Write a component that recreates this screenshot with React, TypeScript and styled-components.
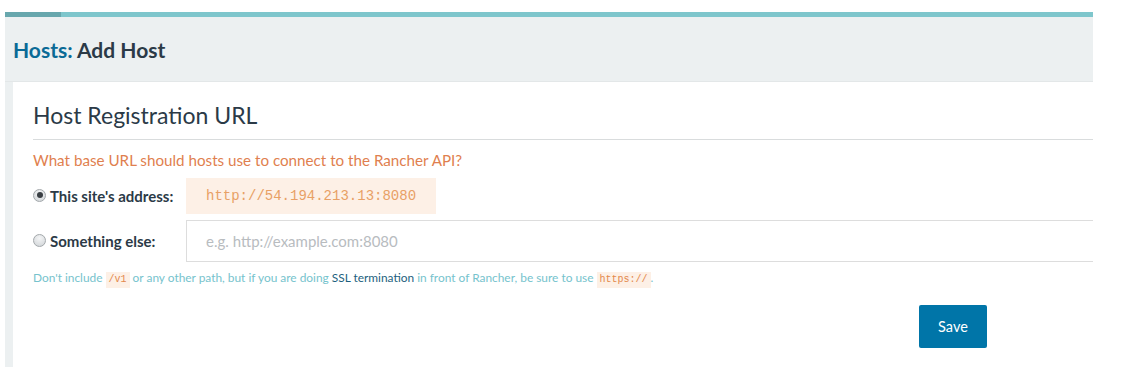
import React, { useState } from "react";
import styled, { createGlobalStyle } from "styled-components";

const GlobalStyle = createGlobalStyle`
  body {
    margin: 0;
    background: #ffffff;
    font-family: Lato, "Open Sans", "Liberation Sans", sans-serif;
  }
`;

const App = () => {
  const [choice, setChoice] = useState<"site" | "other">("site");

  return (
    <>
      <GlobalStyle />
      <Page>
        <TopBar>
          <TopBarActive />
        </TopBar>
        <Header>
          <Title>
            <TitleLink>Hosts:</TitleLink> Add Host
          </Title>
        </Header>
        <Card>
          <Heading>Host Registration URL</Heading>
          <Question>What base URL should hosts use to connect to the Rancher API?</Question>
          <Row>
            <Label>
              <Radio
                type="radio"
                name="url"
                checked={choice === "site"}
                onChange={() => setChoice("site")}
              />
              This site's address:
            </Label>
            <SiteAddress>http://54.194.213.13:8080</SiteAddress>
          </Row>
          <Row $gap={6}>
            <Label>
              <Radio
                type="radio"
                name="url"
                checked={choice === "other"}
                onChange={() => setChoice("other")}
              />
              Something else:
            </Label>
            <TextInput placeholder="e.g. http://example.com:8080" />
          </Row>
          <Help>
            Don't include <Chip>/v1</Chip> or any other path, but if you are doing{" "}
            <Strong>SSL termination</Strong> in front of Rancher, be sure to use{" "}
            <Chip>https://</Chip>.
          </Help>
          <Footer>
            <SaveButton>Save</SaveButton>
          </Footer>
        </Card>
      </Page>
    </>
  );
};

export default App;

const Page = styled.div`
  margin: 12px 0 0 5px;
  width: 1088px;
  height: 355px;
  background: #ecf0f1;
  overflow: hidden;
  display: flex;
  flex-direction: column;
`;

const TopBar = styled.div`
  height: 5px;
  flex-shrink: 0;
  background: #7ec6cc;
  display: flex;
`;

const TopBarActive = styled.div`
  width: 56px;
  background: #68a7ad;
`;

const Header = styled.div`
  height: 64px;
  flex-shrink: 0;
  display: flex;
  align-items: center;
  padding-left: 8px;
  border-bottom: 1px solid #e3e7e8;
`;

const Title = styled.h1`
  margin: 0;
  font-size: 21px;
  font-weight: 700;
  color: #2b3a47;
`;

const TitleLink = styled.span`
  color: #0a6a96;
`;

const Card = styled.div`
  margin-left: 8px;
  width: 1840px;
  flex: 1;
  background: #ffffff;
  padding: 0 20px;
`;

const Heading = styled.h2`
  margin: 0;
  padding: 20px 0 10px;
  font-size: 23px;
  font-weight: 400;
  line-height: 27px;
  color: #2b3a47;
  border-bottom: 1px solid #d9dcdd;
`;

const Question = styled.p`
  margin: 10px 0 8px;
  font-size: 15.2px;
  line-height: 20px;
  color: #df7f4f;
`;

const Row = styled.div<{ $gap?: number }>`
  display: flex;
  align-items: center;
  margin-top: ${({ $gap }) => $gap ?? 0}px;
`;

const Label = styled.label`
  width: 153px;
  flex-shrink: 0;
  display: flex;
  align-items: center;
  gap: 4px;
  font-size: 15px;
  font-weight: 700;
  color: #2b3a47;
`;

const Radio = styled.input`
  appearance: none;
  margin: 0 0 2px;
  width: 13px;
  height: 13px;
  border-radius: 50%;
  border: 1px solid #a3a8ab;
  background: radial-gradient(circle at 50% 30%, #f4f5f6 0%, #cfd3d6 100%);
  position: relative;

  &:checked::after {
    content: "";
    position: absolute;
    left: 2.5px;
    top: 2.5px;
    width: 6px;
    height: 6px;
    border-radius: 50%;
    background: #3a3f44;
  }
`;

const SiteAddress = styled.div`
  width: 250px;
  height: 36px;
  box-sizing: border-box;
  padding-left: 20px;
  display: flex;
  align-items: center;
  background: #fdf0e6;
  font-family: "Liberation Mono", "DejaVu Sans Mono", monospace;
  font-size: 14px;
  color: #e8a065;
`;

const TextInput = styled.input`
  flex: 1;
  height: 42px;
  box-sizing: border-box;
  padding: 0 19px;
  border: 1px solid #dddddd;
  font-family: Lato, "Liberation Sans", sans-serif;
  font-size: 15px;
  color: #333333;
  outline: none;

  &::placeholder {
    color: #b8bcbf;
  }
`;

const Help = styled.p`
  margin: 6px 0 0;
  font-size: 11.9px;
  line-height: 20px;
  color: #76c3cd;
`;

const Chip = styled.code`
  display: inline-block;
  padding: 0 3px;
  background: #fdf0e6;
  color: #e3884c;
  font-family: "Liberation Mono", "DejaVu Sans Mono", monospace;
  font-size: 10px;
  line-height: 16px;
`;

const Strong = styled.span`
  color: #1d5f7e;
`;

const Footer = styled.div`
  display: flex;
  justify-content: center;
  margin-top: 17px;
`;

const SaveButton = styled.button`
  width: 68px;
  height: 43px;
  border: none;
  border-radius: 2px;
  background: #0075a8;
  color: #ffffff;
  font-family: Lato, "Liberation Sans", sans-serif;
  font-size: 14.5px;
  cursor: pointer;
`;
